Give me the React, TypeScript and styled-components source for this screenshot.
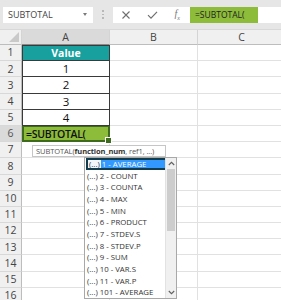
import React from "react";
import styled, { createGlobalStyle, css } from "styled-components";

const GlobalStyle = createGlobalStyle`
  html, body {
    margin: 0;
    padding: 0;
    background: #ffffff;
  }
  body {
    font-family: "Open Sans", "Noto Sans", sans-serif;
  }
`;

const ROW_H = 16.2;
const rows = [
  { n: 1, value: "Value", kind: "head" },
  { n: 2, value: "1", kind: "data" },
  { n: 3, value: "2", kind: "data" },
  { n: 4, value: "3", kind: "data" },
  { n: 5, value: "4", kind: "data" },
  { n: 6, value: "=SUBTOTAL(", kind: "edit" },
];

const fns = [
  "1 - AVERAGE",
  "2 - COUNT",
  "3 - COUNTA",
  "4 - MAX",
  "5 - MIN",
  "6 - PRODUCT",
  "7 - STDEV.S",
  "8 - STDEV.P",
  "9 - SUM",
  "10 - VAR.S",
  "11 - VAR.P",
  "101 - AVERAGE",
];

export default function App() {
  const allRows = Array.from({ length: 16 }, (_, i) => i + 1);

  return (
    <>
      <GlobalStyle />
      <Frame>
        <Toolbar>
          <NameBox>
            SUBTOTAL
            <Caret />
          </NameBox>
          <Grip>
            <i />
            <i />
            <i />
          </Grip>
          <FormulaBar>
            <Buttons>
              <svg width="10" height="10" viewBox="0 0 10 10">
                <path d="M1.5 1.5L8.5 8.5M8.5 1.5L1.5 8.5" stroke="#6f6f6f" strokeWidth="1.1" />
              </svg>
              <svg width="11" height="10" viewBox="0 0 11 10">
                <path d="M1 5.2L4 8.2L10 1.8" stroke="#6f6f6f" strokeWidth="1.2" fill="none" />
              </svg>
              <Fx>
                f<sub>x</sub>
              </Fx>
            </Buttons>
            <FormulaText>=SUBTOTAL(</FormulaText>
          </FormulaBar>
        </Toolbar>

        <Sheet>
          <Corner>
            <svg width="10" height="10" viewBox="0 0 10 10">
              <path d="M10 0L10 10L0 10Z" fill="#c9c9c9" />
            </svg>
          </Corner>
          <ColHead $active>A</ColHead>
          <ColHead>B</ColHead>
          <ColHead>C</ColHead>

          {allRows.map((n) => {
            const r = rows.find((x) => x.n === n);
            return (
              <React.Fragment key={n}>
                <RowHead $active={n === 6}>{n}</RowHead>
                {r ? (
                  <TableCell $kind={r.kind}>
                    {r.value}
                    {r.kind === "edit" && <Handle />}
                  </TableCell>
                ) : (
                  <Cell />
                )}
                <Cell />
                <Cell />
              </React.Fragment>
            );
          })}
        </Sheet>

        <Tip>
          SUBTOTAL(<b>function_num</b>, ref1, ...)
        </Tip>

        <List>
          <Items>
            {fns.map((f, i) => (
              <Item key={f} $selected={i === 0}>
                <Ico $selected={i === 0}>(...)</Ico>
                <Label>{f}</Label>
              </Item>
            ))}
          </Items>
          <Scroll>
            <Arrow>
              <svg width="7" height="5" viewBox="0 0 7 5">
                <path d="M0.8 4L3.5 1.3L6.2 4" stroke="#606060" strokeWidth="1.1" fill="none" />
              </svg>
            </Arrow>
            <Thumb />
            <Track />
            <Arrow>
              <svg width="7" height="5" viewBox="0 0 7 5">
                <path d="M0.8 1L3.5 3.7L6.2 1" stroke="#606060" strokeWidth="1.1" fill="none" />
              </svg>
            </Arrow>
          </Scroll>
        </List>
      </Frame>
    </>
  );
}

const Frame = styled.div`
  position: relative;
  width: 281px;
  height: 300px;
  overflow: hidden;
  background: #fff;
`;

const Toolbar = styled.div`
  display: flex;
  align-items: center;
  height: 30px;
  padding: 0 0 0 3px;
  box-sizing: border-box;
  background: #e6e6e6;
  border-bottom: 1px solid #d8d8d8;
`;

const NameBox = styled.div`
  position: relative;
  display: flex;
  align-items: center;
  width: 90px;
  height: 16px;
  padding-left: 5px;
  box-sizing: border-box;
  background: #fff;
  font-size: 9px;
  color: #444;
`;

const Caret = styled.span`
  position: absolute;
  right: 6px;
  top: 6px;
  width: 0;
  height: 0;
  border-left: 2.5px solid transparent;
  border-right: 2.5px solid transparent;
  border-top: 3px solid #7a7a7a;
`;

const Grip = styled.div`
  display: flex;
  flex-direction: column;
  gap: 2px;
  width: 20px;
  align-items: center;
  i {
    display: block;
    width: 1.5px;
    height: 1.5px;
    background: #b8b8b8;
  }
`;

const FormulaBar = styled.div`
  flex: 1;
  display: flex;
  align-items: center;
  height: 16px;
  background: #fff;
`;

const Buttons = styled.div`
  display: flex;
  align-items: center;
  justify-content: space-between;
  width: 77px;
  padding: 0 10px 0 8px;
  box-sizing: border-box;
`;

const Fx = styled.span`
  font-family: "Liberation Serif", serif;
  font-style: italic;
  font-size: 10px;
  color: #777;
  sub {
    font-size: 6px;
  }
`;

const FormulaText = styled.div`
  display: flex;
  align-items: center;
  width: 68px;
  height: 16px;
  padding-left: 5px;
  box-sizing: border-box;
  background: #8dbb3a;
  font-size: 8.5px;
  color: #222;
`;

const Sheet = styled.div`
  display: grid;
  grid-template-columns: 22px 88px 88px 88px;
  grid-template-rows: 15px;
  grid-auto-rows: ${ROW_H}px;
  font-family: "Open Sans", "Noto Sans", sans-serif;
`;

const headBase = css`
  display: flex;
  align-items: center;
  justify-content: center;
  box-sizing: border-box;
  color: #444;
`;

const Corner = styled.div`
  display: flex;
  align-items: flex-end;
  justify-content: flex-end;
  padding: 0 2px 2px 0;
  box-sizing: border-box;
  background: #f0f0f0;
  border-right: 1px solid #d4d4d4;
  border-bottom: 1px solid #bdbdbd;
`;

const ColHead = styled.div<{ $active?: boolean }>`
  ${headBase}
  font-size: 10.5px;
  background: ${(p) => (p.$active ? "#dadada" : "#f0f0f0")};
  border-right: 1px solid #d4d4d4;
  border-bottom: 1px solid ${(p) => (p.$active ? "#8a8a8a" : "#bdbdbd")};
`;

const RowHead = styled.div<{ $active?: boolean }>`
  ${headBase}
  font-size: 10.5px;
  line-height: 1;
  background: ${(p) => (p.$active ? "#dadada" : "#f0f0f0")};
  color: ${(p) => (p.$active ? "#555" : "#444")};
  border-right: 1px solid #bdbdbd;
  border-bottom: 1px solid #d8d8d8;
`;

const Cell = styled.div`
  box-sizing: border-box;
  border-right: 1px solid #e1e1e1;
  border-bottom: 1px solid #e1e1e1;
`;

const TableCell = styled.div<{ $kind: string }>`
  position: relative;
  display: flex;
  align-items: center;
  box-sizing: border-box;
  font-size: 11.5px;
  color: #111;
  border: 1px solid #3a3a3a;
  border-top: none;
  justify-content: center;
  ${(p) =>
    p.$kind === "head" &&
    css`
      background: #17a09d;
      color: #fff;
      font-weight: 700;
      font-size: 10.5px;
      border-top: 1px solid #3a3a3a;
    `}
  ${(p) =>
    p.$kind === "edit" &&
    css`
      justify-content: flex-start;
      padding-left: 2px;
      background: #8dbb3a;
      font-weight: 600;
      border: 2px solid #3e6b1e;
      border-top-width: 1px;
      font-size: 10.5px;
      letter-spacing: -0.3px;
    `}
`;

const Handle = styled.span`
  position: absolute;
  right: -4px;
  bottom: -4px;
  width: 5px;
  height: 5px;
  background: #3e6b1e;
  border: 1px solid #fff;
`;

const Tip = styled.div`
  position: absolute;
  left: 32px;
  top: 145px;
  width: 134px;
  height: 12px;
  box-sizing: border-box;
  padding-left: 3px;
  display: flex;
  align-items: center;
  background: #fff;
  border: 1px solid #c6c6c6;
  font-size: 7.5px;
  letter-spacing: -0.1px;
  color: #555;
  white-space: nowrap;
  b {
    color: #333;
  }
`;

const List = styled.div`
  position: absolute;
  left: 84px;
  top: 157px;
  width: 93px;
  height: 142px;
  box-sizing: border-box;
  display: flex;
  background: #fff;
  border: 1px solid #a8a8a8;
`;

const Items = styled.div`
  flex: 1;
  display: flex;
  flex-direction: column;
  padding-left: 1px;
`;

const Item = styled.div<{ $selected?: boolean }>`
  display: flex;
  align-items: center;
  height: 11.85px;
  box-sizing: border-box;
  font-size: 7.8px;
  color: #333;
  white-space: nowrap;
  ${(p) =>
    p.$selected &&
    css`
      background: #3399ff;
      color: #fff;
      border: 2px solid #123d4f;
      margin-right: -2px;
    `}
`;

const Ico = styled.span<{ $selected?: boolean }>`
  padding: 0 1px;
  color: ${(p) => (p.$selected ? "#1d2f4a" : "#333")};
  background: ${(p) => (p.$selected ? "#f2f6fb" : "transparent")};
  height: 100%;
  display: flex;
  align-items: center;
`;

const Label = styled.span`
  padding-left: 1px;
`;

const Scroll = styled.div`
  width: 10px;
  display: flex;
  flex-direction: column;
  background: #f0f0f0;
  border-left: 1px solid #e2e2e2;
`;

const Arrow = styled.div`
  height: 11px;
  display: flex;
  align-items: center;
  justify-content: center;
  background: #f0f0f0;
`;

const Thumb = styled.div`
  height: 62px;
  margin: 0 1px;
  background: #cdcdcd;
`;

const Track = styled.div`
  flex: 1;
`;
